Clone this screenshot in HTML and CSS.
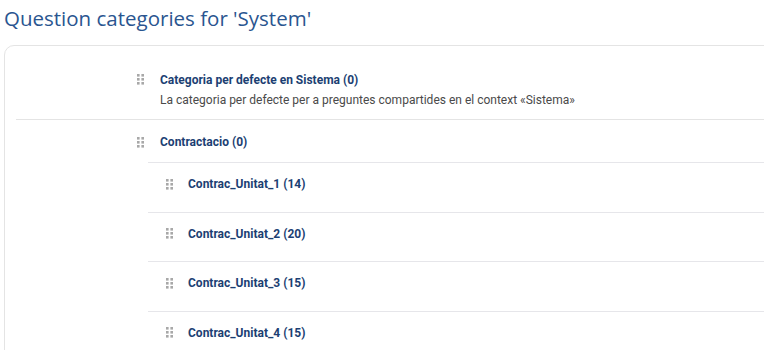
FILE: index.html
```html
<!DOCTYPE html>
<html lang="ca">
<head>
  <meta charset="UTF-8">
  <title>Question categories</title>
  <meta name="viewport" content="width=device-width, initial-scale=1.0">
  <link rel="stylesheet" href="styles.css">
</head>
<body>

  <h2 class="page-title">Question categories for 'System'</h2>

  <div class="card">
    <ul class="category-list">
      <li class="category">
        <div class="category-row">
          <span class="handle"><svg width="8" height="11" viewBox="0 0 8 11"><rect x="0" y="0" width="2.6" height="2.6"/><rect x="4.4" y="0" width="2.6" height="2.6"/><rect x="0" y="4" width="2.6" height="2.6"/><rect x="4.4" y="4" width="2.6" height="2.6"/><rect x="0" y="8" width="2.6" height="2.6"/><rect x="4.4" y="8" width="2.6" height="2.6"/></svg></span>
          <div>
            <a class="category-name" href="#">Categoria per defecte en Sistema (0)</a>
            <div class="category-desc">La categoria per defecte per a preguntes compartides en el context «Sistema»</div>
          </div>
        </div>
      </li>
      <li class="category">
        <div class="category-row">
          <span class="handle"><svg width="8" height="11" viewBox="0 0 8 11"><rect x="0" y="0" width="2.6" height="2.6"/><rect x="4.4" y="0" width="2.6" height="2.6"/><rect x="0" y="4" width="2.6" height="2.6"/><rect x="4.4" y="4" width="2.6" height="2.6"/><rect x="0" y="8" width="2.6" height="2.6"/><rect x="4.4" y="8" width="2.6" height="2.6"/></svg></span>
          <a class="category-name" href="#">Contractacio (0)</a>
        </div>

        <ul class="sub-list">
          <li class="sub-category">
            <div class="category-row">
              <span class="handle"><svg width="8" height="11" viewBox="0 0 8 11"><rect x="0" y="0" width="2.6" height="2.6"/><rect x="4.4" y="0" width="2.6" height="2.6"/><rect x="0" y="4" width="2.6" height="2.6"/><rect x="4.4" y="4" width="2.6" height="2.6"/><rect x="0" y="8" width="2.6" height="2.6"/><rect x="4.4" y="8" width="2.6" height="2.6"/></svg></span>
              <a class="category-name" href="#">Contrac_Unitat_1 (14)</a>
            </div>
          </li>
          <li class="sub-category">
            <div class="category-row">
              <span class="handle"><svg width="8" height="11" viewBox="0 0 8 11"><rect x="0" y="0" width="2.6" height="2.6"/><rect x="4.4" y="0" width="2.6" height="2.6"/><rect x="0" y="4" width="2.6" height="2.6"/><rect x="4.4" y="4" width="2.6" height="2.6"/><rect x="0" y="8" width="2.6" height="2.6"/><rect x="4.4" y="8" width="2.6" height="2.6"/></svg></span>
              <a class="category-name" href="#">Contrac_Unitat_2 (20)</a>
            </div>
          </li>
          <li class="sub-category">
            <div class="category-row">
              <span class="handle"><svg width="8" height="11" viewBox="0 0 8 11"><rect x="0" y="0" width="2.6" height="2.6"/><rect x="4.4" y="0" width="2.6" height="2.6"/><rect x="0" y="4" width="2.6" height="2.6"/><rect x="4.4" y="4" width="2.6" height="2.6"/><rect x="0" y="8" width="2.6" height="2.6"/><rect x="4.4" y="8" width="2.6" height="2.6"/></svg></span>
              <a class="category-name" href="#">Contrac_Unitat_3 (15)</a>
            </div>
          </li>
          <li class="sub-category">
            <div class="category-row">
              <span class="handle"><svg width="8" height="11" viewBox="0 0 8 11"><rect x="0" y="0" width="2.6" height="2.6"/><rect x="4.4" y="0" width="2.6" height="2.6"/><rect x="0" y="4" width="2.6" height="2.6"/><rect x="4.4" y="4" width="2.6" height="2.6"/><rect x="0" y="8" width="2.6" height="2.6"/><rect x="4.4" y="8" width="2.6" height="2.6"/></svg></span>
              <a class="category-name" href="#">Contrac_Unitat_4 (15)</a>
            </div>
          </li>
        </ul>
      </li>
    </ul>
  </div>

</body>
</html>
```

FILE: styles.css
```css
body {
  font-family: Roboto, "Liberation Sans", sans-serif;
  background-color: #fff;
  margin: 0;
  padding: 0 4px;
  overflow: hidden;
}

.page-title {
  font-family: "Open Sans", sans-serif;
  font-weight: 400;
  font-size: 20.5px;
  line-height: 24px;
  color: #2a5590;
  margin: 6px 0 15px 0;
}

.card {
  width: 820px;
  border: 1px solid #e4e4e4;
  border-radius: 10px;
  padding: 12px 0 0 11px;
}

.category-list,
.sub-list {
  list-style: none;
  margin: 0;
  padding: 0;
}

.category {
  padding: 12px 0 10px 0;
  border-bottom: 1px solid #e4e4e4;
}

.category:first-child {
  padding: 11px 0 9px 0;
}

.category-row {
  display: flex;
  align-items: flex-start;
  padding-left: 121px;
}

.handle {
  width: 23px;
  height: 20px;
  display: flex;
  align-items: center;
  flex-shrink: 0;
}

.handle svg {
  fill: #a8a8a8;
}

.category-name {
  font-size: 12px;
  line-height: 20px;
  font-weight: bold;
  color: #1c3f73;
  text-decoration: none;
}

.category-desc {
  font-size: 12px;
  line-height: 20px;
  color: #4a4a4a;
}

.sub-list {
  margin: 10px 0 0 132px;
}

.sub-category {
  border-top: 1px solid #e6e6ea;
  padding: 11px 0 17.5px 0;
}

.sub-category .category-row {
  padding-left: 18px;
}

.sub-category .handle {
  width: 22px;
}
```
